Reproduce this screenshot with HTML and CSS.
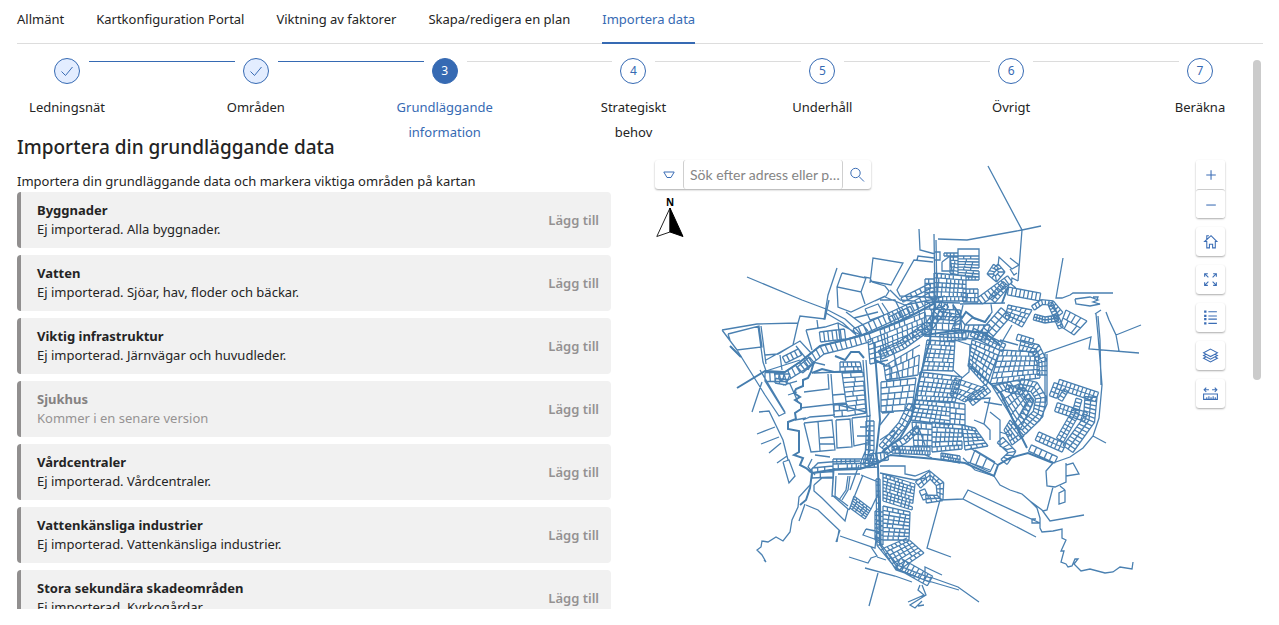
FILE: index.html
```html
<!DOCTYPE html>
<html lang="sv">
<head>
<meta charset="utf-8">
<title>Importera data</title>
<link rel="stylesheet" href="styles.css">
</head>
<body>
<nav class="tabs">
  <a class="tab" href="#allmant">Allmänt</a>
  <a class="tab" href="#kart">Kartkonfiguration Portal</a>
  <a class="tab" href="#viktning">Viktning av faktorer</a>
  <a class="tab" href="#plan">Skapa/redigera en plan</a>
  <a class="tab active" href="#import" aria-current="page">Importera data</a>
</nav>
<main class="scroller">
  <ol class="steps">
    <li class="step done"><div class="head"><span class="dot"><svg width="14" height="14" viewBox="0 0 14 14"><path d="M1.5 7.5 5.5 11.5 12.5 3"/></svg></span><span class="line"></span></div><div class="label">Ledningsnät</div></li>
    <li class="step done"><div class="head"><span class="dot"><svg width="14" height="14" viewBox="0 0 14 14"><path d="M1.5 7.5 5.5 11.5 12.5 3"/></svg></span><span class="line"></span></div><div class="label">Områden</div></li>
    <li class="step current"><div class="head"><span class="dot">3</span><span class="line"></span></div><div class="label">Grundläggande information</div></li>
    <li class="step"><div class="head"><span class="dot">4</span><span class="line"></span></div><div class="label">Strategiskt behov</div></li>
    <li class="step"><div class="head"><span class="dot">5</span><span class="line"></span></div><div class="label">Underhåll</div></li>
    <li class="step"><div class="head"><span class="dot">6</span><span class="line"></span></div><div class="label">Övrigt</div></li>
    <li class="step"><div class="head"><span class="dot">7</span></div><div class="label">Beräkna</div></li>
  </ol>
  <div class="columns">
    <section class="import">
      <h1>Importera din grundläggande data</h1>
      <p class="intro">Importera din grundläggande data och markera viktiga områden på kartan</p>
      <ul class="cards">
        <li class="card"><div><h2>Byggnader</h2><p>Ej importerad. Alla byggnader.</p></div><button>Lägg till</button></li>
        <li class="card"><div><h2>Vatten</h2><p>Ej importerad. Sjöar, hav, floder och bäckar.</p></div><button>Lägg till</button></li>
        <li class="card"><div><h2>Viktig infrastruktur</h2><p>Ej importerad. Järnvägar och huvudleder.</p></div><button>Lägg till</button></li>
        <li class="card off"><div><h2>Sjukhus</h2><p>Kommer i en senare version</p></div><button disabled>Lägg till</button></li>
        <li class="card"><div><h2>Vårdcentraler</h2><p>Ej importerad. Vårdcentraler.</p></div><button>Lägg till</button></li>
        <li class="card"><div><h2>Vattenkänsliga industrier</h2><p>Ej importerad. Vattenkänsliga industrier.</p></div><button>Lägg till</button></li>
        <li class="card"><div><h2>Stora sekundära skadeområden</h2><p>Ej importerad. Kyrkogårdar</p></div><button>Lägg till</button></li>
      </ul>
    </section>
    <section class="map" aria-label="Karta">
      <svg class="network" viewBox="635 134 615 475" preserveAspectRatio="xMinYMin meet"><path id="net"/><path id="roads"/></svg>
      <div class="overlay left">
        <form class="search">
          <button type="button" aria-label="Sök i"><svg width="12" height="8" viewBox="0 0 12 8"><path d="M.8 1h10.4L8 6.500H4Z"/></svg></button>
          <input type="text" aria-label="Sök" placeholder="Sök efter adress eller plats">
          <button type="button" aria-label="Sök"><svg width="16" height="16" viewBox="0 0 16 16"><circle cx="6.500" cy="6" r="4.700"/><path d="m10 9.500 5 5"/></svg></button>
        </form>
        <svg class="north" width="30" height="44" viewBox="0 0 30 44"><text x="15" y="11" text-anchor="middle">N</text><path d="M15 13 1.800 41.500 15 37Z" fill="#fff" stroke="#222"/><path d="M15 13V37L28 41.500Z" fill="#000" stroke="#000"/></svg>
      </div>
      <div class="overlay tools">
        <div class="group">
          <button aria-label="Zooma in"><svg viewBox="0 0 16 16"><path d="M8.500 4v9M4 8.500h9"/></svg></button>
          <button aria-label="Zooma ut"><svg viewBox="0 0 16 16"><path d="M4 8.500h9"/></svg></button>
        </div>
        <button aria-label="Hem"><svg viewBox="0 0 16 16"><path d="M2.500 8 8.500 2.500l5.500 5.500h-1.500V14h-2.500V10.500h-3V14H4.500V8ZM4.500 6V2.500h2"/></svg></button>
        <button aria-label="Helskärm"><svg viewBox="0 0 16 16"><path d="M2.500 5.500v-3h3M10.500 2.500h3v3M2.500 10.500v3h3M10.500 13.500h3v-3M2.500 2.500l3.500 3.500M13.500 2.500l-3.500 3.500M2.500 13.500l3.500-3.500M13.500 13.500l-3.500-3.500"/></svg></button>
        <button aria-label="Teckenförklaring"><svg viewBox="0 0 16 16"><path d="M6 2.500h8M6 6.500h8M6 9.500h8M6 13.500h8"/><path class="thick" d="M2 2.500h2.200M2 6.500h2.200M2 9.500h2.200M2 13.500h2.200"/></svg></button>
        <button aria-label="Lager"><svg viewBox="0 0 16 16"><path d="M8 2 14.500 5.500 8 9 1.500 5.500ZM3.500 7 1.500 8 8 11.500 14.500 8l-2-1M3.500 9.500l-2 1L8 14l6.500-3.500-2-1"/></svg></button>
        <button aria-label="Mät"><svg viewBox="0 0 16 16"><path d="M1.500 8.500h13v5h-13ZM4.500 13.500v-2M6.500 13.500v-3M8.500 13.500v-2M10.500 13.500v-3M12.500 13.500v-2M2 4.500h4.500M9.500 4.500H14M4 2.500l-2 2 2 2M12 2.500l2 2-2 2"/></svg></button>
      </div>
    </section>
  </div>
  <div class="thumb"></div>
</main>
<script src="map.js"></script>
</body>
</html>
```
FILE: styles.css
```css
* { box-sizing: border-box; margin: 0; padding: 0; }
body {
  height: 100vh;
  padding: 0 16px 16px 17px;
  display: flex;
  flex-direction: column;
  font: 13px/20px "Noto Sans", "Open Sans", sans-serif;
  color: #242424;
  background: #fff;
  overflow: hidden;
}
button, input { font: inherit; background: none; border: 0; }
ul, ol { list-style: none; }
svg { fill: none; stroke: #3b6db5; }

.tabs { display: flex; gap: 32px; height: 44px; border-bottom: 1px solid #ddd; flex: none; }
.tab { height: 44px; padding-top: 9px; color: inherit; text-decoration: none; white-space: nowrap; }
.tab.active { color: #366ab3; border-bottom: 2px solid #366ab3; }

.scroller { position: relative; flex: 1; min-height: 0; padding: 14px 13px 0 0; display: flex; flex-direction: column; overflow: hidden; }
.thumb { position: absolute; top: 16px; right: 2px; width: 8px; height: 320px; border-radius: 4px; background: #cbcbcb; }

.steps { display: flex; flex: none; margin-bottom: -11px; }
.step { flex: 1; min-width: 0; }
.step:last-child { flex: 0 0 100px; }
.head { display: flex; gap: 9px; padding-left: 37px; height: 26px; }
.dot { width: 26px; height: 26px; flex: none; display: flex; align-items: center; justify-content: center; border: 1px solid #366ab3; border-radius: 50%; color: #366ab3; font-size: 12px; }
.line { flex: 1; height: 1px; margin: 3px -29px 0 0; background: #dcdcdc; }
.label { width: 100px; margin-top: 11px; line-height: 25px; text-align: center; }
.done .dot { background: #e3edff; }
.done .line { background: #366ab3; }
.current .dot { background: #366ab3; color: #fff; }
.current .label { color: #366ab3; }

.columns { display: grid; grid-template-columns: minmax(0, 594fr) minmax(0, 615fr); gap: 24px; flex: 1; min-height: 0; }
h1 { font-size: 19px; line-height: 26px; font-weight: 500; }
.intro { margin: 11px 0 1px; }
.cards { display: grid; gap: 7px; }
.card { display: flex; align-items: center; justify-content: space-between; height: 56px; padding: 0 12px 0 16px; border-left: 4px solid #918f8f; border-radius: 4px; background: #f1f1f1; line-height: 19px; }
.card h2 { font-size: 13px; font-weight: 700; line-height: 19px; }
.card button { font-weight: 600; color: #949191; }
.card.off { color: #969393; }
.card.off h2 { color: #858282; }

.map { position: relative; min-height: 0; }
.network { display: block; width: 100%; }
#net { stroke: #4a80b1; stroke-width: 1.3; }
#roads { stroke: #457dae; stroke-width: 2; }
.overlay { position: absolute; top: 26px; }
.left { left: 20px; display: grid; gap: 6px; }
.search { display: flex; width: 216px; height: 29px; border-radius: 3px; box-shadow: 0 1px 2px #0005; background: #fff; }
.search button { width: 28px; flex: none; display: flex; align-items: center; justify-content: center; }
.search input { flex: 1; min-width: 0; padding: 0 0 0 6px; border: solid #cfcfcf; border-width: 0 1px; border-radius: 3px; font: 14px Lato, sans-serif; text-overflow: ellipsis; }
.search input::placeholder { color: #858585; }
.north { stroke-width: 1; }
.north text { font: 700 10px "Open Sans", sans-serif; fill: #000; stroke: none; }
.tools { right: 25px; display: grid; gap: 9px; }
.tools button { display: grid; place-items: center; width: 29px; height: 29px; border-radius: 3px; background: #fff; box-shadow: 0 1px 2px #0005; }
.tools svg { width: 17px; height: 17px; }
.tools .thick { stroke-width: 2; }
.group { border-radius: 3px; box-shadow: 0 1px 2px #0005; }
.group button { box-shadow: none; }
.group button + button { border-top: 1px solid #ccc; }
```
FILE: map.js
```js
const pts = s => s.trim().split(/\s+/).map(p => p.split(',').map(Number));
const lerp = (a, b, t) => [a[0] + (b[0] - a[0]) * t, a[1] + (b[1] - a[1]) * t];
const seg = (a, b) => `M${a[0].toFixed(1)} ${a[1].toFixed(1)}L${b[0].toFixed(1)} ${b[1].toFixed(1)}`;
const poly = s => 'M' + pts(s).map(p => p.join(' ')).join('L');

// Block of parcels inside a quadrilateral: nx columns, ny rows of lots.
function block(s, nx, ny) {
  const [a, b, c, d] = pts(s);
  const at = (u, v) => lerp(lerp(a, b, u), lerp(d, c, u), v);
  let out = '';
  for (let j = 0; j <= ny; j++) out += seg(at(0, j / ny), at(1, j / ny));
  for (let j = 0; j < ny; j++)
    for (let i = 0; i <= nx; i++) {
      const u = i === 0 || i === nx ? i / nx : (i + ((j * 3) % 4 - 1.5) * 0.12) / nx;
      if ((i * 5 + j * 7) % 13 !== 4) out += seg(at(u, j / ny), at(u, (j + 1) / ny));
    }
  return out;
}

// Row of parcels along a street: two edges, a centre line and cross lines.
function strip(s, w, step, centre) {
  const p = pts(s);
  let out = '';
  const edges = [[], [], []];
  const n = p.map((q, i) => {
    const a = p[Math.max(0, i - 1)], b = p[Math.min(p.length - 1, i + 1)];
    const l = Math.hypot(b[0] - a[0], b[1] - a[1]) || 1;
    return [-(b[1] - a[1]) / l, (b[0] - a[0]) / l];
  });
  const off = (q, m, k) => [q[0] + m[0] * k, q[1] + m[1] * k];
  p.forEach((q, i) => {
    edges[0].push(off(q, n[i], w / 2));
    edges[1].push(off(q, n[i], -w / 2));
    edges[2].push(q);
  });
  for (let i = 0; i < p.length - 1; i++) {
    for (const e of edges.slice(0, centre ? 3 : 2)) out += seg(e[i], e[i + 1]);
    const k = Math.max(1, Math.round(Math.hypot(p[i + 1][0] - p[i][0], p[i + 1][1] - p[i][1]) / step));
    for (let j = 0; j <= k; j++)
      out += seg(lerp(edges[0][i], edges[0][i + 1], j / k), lerp(edges[1][i], edges[1][i + 1], j / k));
  }
  return out;
}

const lines = `
747,277 802,300 826,309 845,319 857,330 862,336|826,313 843,323 855,334|837,268 828,295 824,320
842,273 866,278 861,292 837,287 842,273|837,287 838,307 851,312 885,296|870,283 873,258 903,263 891,285 870,281
864,277 870,278 872,282 885,286 889,291 886,296 875,301|861,292 865,304|865,309 878,304 884,315 870,320 865,309|882,303 890,315
988,166 1022,230 1018,281|938,239 967,240 1022,230 1041,226|919,229 920,250 935,254|934,234 935,300|936,240 937,300
933,262 914,260 897,290 900,296 926,297 934,299|917,260 918,256 934,258|935,252 940,252 940,260 935,260
958,256 958,249 979,249 979,256|942,262 950,256 952,271 942,271 942,262
998,266 999,257 1012,269 1019,265|1010,269 1014,275 1017,273|1018,281 1012,278 1011,284 1016,288
1063,258 1056,298 1062,298 1070,295 1073,293 1113,293|1075,299 1090,297 1098,300 1093,302 1100,304 1090,306 1076,304 1075,299|1093,297 1098,297 1097,300
1109,320 1116,335 1119,351|1116,335 1141,325|1095,314 1101,310|1106,312 1109,320|1096,314 1098,335 1102,385 1099,418 1093,436 1083,448 1070,457 1053,463
1098,316 1100,340 1101,385|1045,405 1045,353 1091,337 1089,349 1139,353|1047,354 1047,404 1040,420 1022,437|1093,436 1106,443
994,476 1000,485 1010,490 1022,494 1030,501 1037,508 1040,518 1040,528 1042,532 1053,531 1062,529 1062,538 1066,540 1061,551 1064,551 1061,562 1066,564 1068,567 1072,566 1075,559 1078,559 1074,564 1081,571 1090,569 1105,573 1113,572 1120,567 1132,569 1133,562
1053,463 1046,471 1047,486 1055,487 1066,482 1066,463|1066,465 1073,463 1079,474 1066,476|1053,487 1047,510 1043,511|1065,490 1059,493 1059,504 1065,502 1065,490|1060,486 1065,490
1030,501 1042,510 1050,521 1084,515|1036,519 1032,519 1032,523 1040,523|1040,523 968,490 963,499 1036,537|963,499 940,500 927,548 951,557
930,577 958,587 979,602|880,545 896,570 925,580 959,590|925,578 925,567 942,575
810,485 799,497 798,507 792,520 790,532 783,541 776,537 768,542 762,541 761,547 757,550 762,555 766,562 764,560
805,504 799,521|806,505 818,510 839,530 837,542|840,530 836,542|840,536 875,548 877,530|849,557 868,563 871,558 877,556 871,547|877,557 886,560
865,568 895,576 912,582|878,573 869,606|814,485 822,478 833,478 832,495 848,509 845,521 822,498 814,491 814,485
834,468 832,497|836,476 835,496 848,506|848,476 846,490 839,500|850,476 848,490 842,500|863,475 849,510|861,475 878,482 878,494 871,509|859,465 850,490
880,466 905,466 905,474 915,476 930,470|880,473 915,480 925,478|866,529 863,535 880,541|866,529 880,532
922,585 926,595 910,605 915,608 922,601|920,585 918,590 924,595 908,602|918,606 924,605
722,330 757,324 798,323 800,316 825,319 829,300|728,334 759,326 762,347 737,350 722,330|728,334 730,340|737,350 765,395 779,416 785,413 765,381|760,370 785,412
762,382 752,412|759,412 769,411 783,440 788,460|757,434 775,427|761,444 779,437|769,453 781,443|777,463 787,456|783,462 789,460 795,476 789,483 783,462
758,326 763,362 766,371 800,360|761,326 766,364|798,323 793,345 766,360|793,345 800,341 812,354|796,346 808,361|806,330 825,327 838,323 862,336|806,330 812,350|817,320 818,328|838,323 840,340
765,355 778,354 793,345|780,355 782,370
814,373 862,371|804,392 829,389 828,374|831,374 834,414|800,408 835,404 866,412|803,420 810,417 835,415|833,395 845,394|833,404 846,403
804,423 832,420 835,450 811,452 804,423|818,421 820,451|820,438 834,437|820,444 834,444|836,420 850,419 852,447 837,448 836,420|852,418 870,416 868,443 854,446 852,418|860,427 868,427|857,436 868,436
863,360 867,415 865,460|866,360 870,415 868,460|883,366 890,366 890,382|882,413 894,412|808,370 813,362 825,365
809,472 818,463 830,462 860,461|812,459 808,467 815,475|838,474 860,474|838,469 860,468|795,420 806,418|815,455 830,457
963,305 960,318 965,325 972,318 985,322 992,312 991,304|960,304 1005,303|955,340 970,345 969,372 962,378 953,370 955,340|1010,258 1019,265|930,310 945,306
965,400 990,398 984,424 974,420|984,402 1002,405|990,412 1000,420 1000,446 1008,450|984,424 990,430 990,440|1000,432 1012,436|906,440 918,426 925,445|898,430 890,442
970,448 998,465|963,458 975,470 994,476|968,462 990,470|925,455 932,458|893,350 900,380|900,300 915,301 920,315|880,300 895,300 905,320|890,290 900,300|1000,340 1018,345
885,297 905,305 935,299|846,312 862,324 868,331|854,318 878,312|895,430 880,440|890,412 880,425|900,455 898,447|776,378 790,384 798,402|783,385 797,381|788,395 797,392|930,300 945,296|1002,342 1012,325
`.split(/[|\n]/).filter(Boolean);

const strips = [
  ['980,301 1010,279', 8, 4], ['996,266 1002,272 996,279 990,274 996,266', 6, 4], ['1008,291 1040,297', 8, 4],
  ['992,300 1006,284', 8, 4, 1], ['1033,308 1042,302 1052,303 1061,314', 5, 4], ['1034,317 1045,320 1058,318', 6, 3, 1],
  ['1050,303 1061,328', 5, 3], ['1058,384 1097,397', 10, 4, 1], ['1058,384 1053,397', 8, 4, 1], ['1091,397 1089,420 1068,449', 12, 4, 1],
  ['1079,399 1076,410', 6, 4], ['1066,390 1060,400', 5, 4], ['1056,407 1086,417', 9, 4, 1], ['1037,436 1064,448', 9, 4, 1], ['1076,412 1060,440', 8, 4, 1],
  ['1020,345 1036,349 1042,362 1042,375', 10, 4, 1], ['1020,384 1034,387 1041,398 1038,414 1022,430', 11, 4, 1],
  ['1017,337 1033,342', 6, 4], ['1030,448 1056,460', 7, 6], ['878,479 879,545 897,567 930,580', 4, 6],
  ['898,563 930,581', 11, 5], ['918,485 930,475 940,484 940,498 926,499', 8, 5, 1], ['926,499 922,490', 6, 4],
  ['765,377 785,377 802,366 822,350 846,344 870,337', 9, 5], ['855,333 880,322 908,309 935,295', 9, 5], ['820,337 845,334', 10, 4],
  ['870,421 870,450 864,465', 8, 5, 1], ['882,448 902,425 912,405', 8, 5, 1], ['885,452 905,440 918,428', 6, 5],
  ['945,304 930,325 902,345 880,355', 9, 4, 1], ['985,336 1006,312', 13, 5, 1], ['938,315 958,318 955,332', 8, 4],
  ['890,321 912,310', 8, 4], ['970,402 988,388', 9, 4, 1], ['1000,440 1012,452 1004,462', 8, 4], ['800,370 812,360', 8, 4],
  ['1006,388 1024,392 1030,402 1022,418', 7, 4], ['972,332 1004,348', 8, 4, 1], ['784,360 800,352', 7, 5], ['870,458 888,456', 8, 4],
  ['940,338 966,336', 7, 4], ['902,300 930,286', 5, 5]
];
const blocks = [
  ['958,256 979,256 979,277 958,275', 3, 7], ['944,253 958,253 958,256 944,256', 4, 1], ['950,257 958,257 958,275 950,273', 2, 5],
  ['934,273 966,276 966,301 934,301', 8, 6], ['963,289 978,289 978,302 963,302', 4, 3], ['925,279 934,279 934,297 925,297', 2, 4],
  ['966,277 979,277 979,280 966,280', 4, 1], ['1008,305 1032,310 1022,327 1005,318', 5, 4], ['1066,310 1087,321 1074,335 1060,326', 4, 2],
  ['854,496 871,509 865,519 850,508', 5, 5], ['883,474 915,484 912,510 883,501', 8, 8], ['883,506 910,512 909,540 883,540', 5, 8],
  ['875,511 883,512 883,545 875,540', 1, 7], ['884,548 907,538 924,553 899,570', 6, 6],
  ['842,373 863,372 866,413 848,416', 2, 9], ['834,405 847,404 848,416 834,417', 2, 2], ['833,459 878,459 878,467 833,469', 10, 2],
  ['812,468 833,466 833,477 812,478', 3, 2], ['840,362 860,362 862,371 840,372', 5, 2], ['775,374 790,374 786,385 775,383', 3, 2],
  ['927,340 955,342 953,371 922,370', 6, 7], ['920,372 962,377 955,402 917,400', 9, 6], ['916,400 950,403 950,425 911,420', 8, 5],
  ['972,340 1000,350 986,386 968,366', 6, 7], ['1000,350 1038,352 1040,378 990,384', 9, 6], ['992,386 1018,380 1034,400 1020,430', 7, 6],
  ['955,378 985,388 965,402 950,395', 5, 4], ['932,422 962,425 962,449 932,452', 7, 6], ['962,425 975,428 988,446 965,450', 4, 6],
  ['892,446 930,447 930,455 892,453', 14, 2], ['941,453 960,456 960,463 941,459', 8, 2], ['881,382 916,378 912,410 881,412', 5, 5],
  ['884,366 920,345 918,375 886,380', 6, 3], ['1010,420 1024,436 1012,445 1004,430', 4, 4], ['925,302 960,303 962,338 924,336', 6, 5],
  ['965,325 990,325 985,340 962,338', 5, 2], ['880,330 925,312 928,332 884,350', 9, 4], ['868,340 884,334 888,360 870,364', 3, 5],
  ['950,402 965,404 965,425 950,424', 3, 4], ['975,450 995,462 990,472 970,463', 3, 1], ['912,422 932,424 932,446 914,446', 4, 4]
];
const roads = [
  '737,388 765,371 785,372 800,362 820,346 845,340 870,333 905,319 935,303', '730,346 741,357',
  '814,362 811,372 808,378 803,380 803,386 796,389 794,393 800,397 795,400 801,404 801,409 795,413 796,419 788,422 788,429 799,431 799,452 794,455 803,458 800,465 806,468 812,473 810,488 806,500 800,505',
  '812,473 830,470 860,469 878,463 890,455', '890,455 935,459 965,463 994,476 998,465 1010,458 1028,453 1053,463',
  '874,342 876,366 880,420 876,455 878,466 880,545', '935,303 930,340 918,385 911,420 900,438 882,452',
  '970,366 1000,392 1013,420 1027,448', '925,335 960,330 985,333 1000,345', '862,371 834,372 822,369 812,373',
  '835,356 845,360 851,352 859,352 864,358', '1002,303 1008,287', '953,305 962,318 966,312 974,318 985,322 990,315', '885,365 875,360'
];
document.getElementById('net').setAttribute('d',
  lines.map(poly).join('') + strips.map(a => strip(...a)).join('') + blocks.map(a => block(...a)).join(''));
document.getElementById('roads').setAttribute('d', roads.map(poly).join(''));
```
